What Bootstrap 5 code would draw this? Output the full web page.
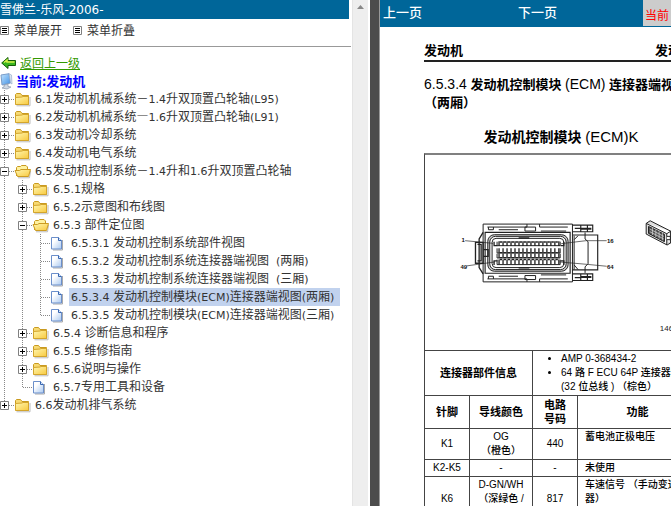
<!DOCTYPE html>
<html lang="zh-CN">
<head>
<meta charset="utf-8">
<meta name="viewport" content="width=device-width, initial-scale=1">
<title>雪佛兰-乐风-2006-</title>
<link href="https://cdn.jsdelivr.net/npm/bootstrap@5.3.0/dist/css/bootstrap.min.css" rel="stylesheet">
<style>
body{font-family:"Noto Sans CJK SC","Liberation Sans",sans-serif;font-size:12px;line-height:18px;color:#333;background:#fff}
svg{flex:none;display:block}
.latin{font-family:"DejaVu Sans",sans-serif;font-size:11px}
.side-title .latin{font-size:12px}
.bar-blue{background:#069;color:#fff}
.side-pane{flex:370 1 0;min-width:0}
.doc-pane{flex:291 1 0;min-width:0;background:#fff}
.splitter{width:10px;background:#4c4c4c;border-right:1px solid #999}
.side-title{height:19px;margin-right:3px}
.side-tools{height:28px;padding-bottom:7px;padding-top:2px;border-bottom:1px solid #999;margin-right:1px;gap:6px}
.side-tools button{color:#333;gap:5px}
.side-tools button + button{margin-left:5px}
.back-link{color:#390;gap:3px;padding-left:1px}
.back-row{padding-top:7px}
.here{font-size:13px;color:#00f;gap:3px}
.scroll-track{width:16px;background:#eee;border-left:1px solid #e4e4e4;margin-right:2px;padding-top:5px}
.tree-row{height:18px}
.tree-row a{color:#333;line-height:16px;padding:0 6px 0 2px;text-decoration:none}
.tree-row a.current{background:#c1d2ee}
.top-nav{height:27px;font-size:13px;line-height:24px}
.top-nav a{color:#fff;text-decoration:none;padding-left:3px}
.nav-prev{flex:0 0 135px}
.nav-next{flex:0 0 128px}
.now-at{background:#ccc;color:red;font-size:12px;line-height:30px;height:26px;padding-left:2px}
.sheet{width:274px;margin:15px 0 0 44px;color:#000;font-family:"Liberation Sans","Noto Sans CJK SC",sans-serif;font-size:13px;line-height:18px}
.run-head{border-bottom:2px solid #222;font-weight:700;padding-right:4px}
.sheet h1{font-size:13px;line-height:18px;margin:13px 0 0;font-weight:700}
.sheet h2{font-size:14px;line-height:20px;margin:15px 0 6px;font-weight:700}
.sheet h1 span,.sheet h2 span{font-weight:500}
.sheet h1 span{font-size:14px}
.sheet h2 span{font-size:15px}
.figure-box{border:1px solid #444;border-top:2px solid #808080;border-bottom:0}
.pins{width:100%;table-layout:fixed;border-collapse:collapse;font-size:11px;line-height:14px;color:#000}
.pins th,.pins td{border:1px solid #444;padding:1px 2px;text-align:center;vertical-align:middle}
.pins td{font-size:10px;font-weight:500}
.pins th{font-weight:700;padding:2px}
.pins .func{text-align:left;padding-left:7px;vertical-align:top;white-space:nowrap}
.pins .info{text-align:left;padding:1px 0 1px 16px;white-space:nowrap}
.info ul{padding-left:12px}
</style>
<script src="https://cdn.jsdelivr.net/npm/bootstrap@5.3.0/dist/js/bootstrap.bundle.min.js"></script>
</head>
<body class="overflow-hidden">
<svg width="0" height="0" class="position-absolute" aria-hidden="true">
<defs>
<linearGradient id="gold" x1="0" y1="0" x2="1" y2="1"><stop offset="0" stop-color="#fff7b0"/><stop offset="1" stop-color="#f8c93e"/></linearGradient>
<linearGradient id="paper" x1="0" y1="0" x2="1" y2="1"><stop offset=".3" stop-color="#fff"/><stop offset="1" stop-color="#a9c8f0"/></linearGradient>
<linearGradient id="screen" x1="0" y1="0" x2="1" y2="1"><stop offset="0" stop-color="#c4e6ff"/><stop offset="1" stop-color="#3f8fe4"/></linearGradient>
<symbol id="vline" viewBox="0 0 18 18"><path d="M4.5 0V18" stroke="#888" stroke-dasharray="1 1"/></symbol>
<symbol id="plus" viewBox="0 0 14 18"><path d="M4.500 0V18M9 9.500H14" stroke="#888" stroke-dasharray="1 1"/><path d="M.5 5.500h8v8h-8z" fill="#fff" stroke="#808080"/><path d="M2 9.500h5M4.500 7v5" stroke="#000"/></symbol>
<symbol id="plusend" viewBox="0 0 14 18"><path d="M4.500 0V9M9 9.500H14" stroke="#888" stroke-dasharray="1 1"/><path d="M.5 5.500h8v8h-8z" fill="#fff" stroke="#808080"/><path d="M2 9.500h5M4.500 7v5" stroke="#000"/></symbol>
<symbol id="minus" viewBox="0 0 14 18"><path d="M4.500 0V18M9 9.500H14" stroke="#888" stroke-dasharray="1 1"/><path d="M.5 5.500h8v8h-8z" fill="#fff" stroke="#808080"/><path d="M2 9.500h5" stroke="#000"/></symbol>
<symbol id="join" viewBox="0 0 14 18"><path d="M4.500 0V18M5 9.500H14" stroke="#888" stroke-dasharray="1 1"/></symbol>
<symbol id="joinend" viewBox="0 0 14 18"><path d="M4.500 0V10M5 9.500H14" stroke="#888" stroke-dasharray="1 1"/></symbol>
<symbol id="folder" viewBox="0 0 19 18"><path d="M2.500 15.800H16V7" fill="none" stroke="#bbb"/><path d="M1.500 14V4.500L2.500 3.500H6.500L8 5.500H14.500V14.500H2z" fill="#f7da73" stroke="#c99a20"/><path d="M1.500 7.500L8 7L9 6.500H14.500V14.500H1.500z" fill="url(#gold)" stroke="#d3a52c"/></symbol>
<symbol id="open" viewBox="0 0 19 18"><path d="M4 15.800H15.500L16.500 9" fill="none" stroke="#bbb"/><path d="M2.500 14V5.500L3.500 4.500H6.500L7.500 3.500H12L13.500 5V9" fill="#fff2a0" stroke="#c99a20"/><path d="M1 8.500H5.500L7 7.500H16.500L14.500 14.500H3.500z" fill="url(#gold)" stroke="#cc9c22"/></symbol>
<symbol id="page" viewBox="0 0 19 18"><path d="M3 16H12.500V6" fill="none" stroke="#aaa"/><path d="M1.500 3.500H8.500L11.500 6.500V15H1.500z" fill="url(#paper)" stroke="#6b8fcb"/><path d="M8.500 3.500V6.500H11.500" fill="#dbe9fb" stroke="#3866b0"/></symbol>
<symbol id="lines" viewBox="0 0 9 9"><path d="M.5.5h8v8h-8z" fill="#fff" stroke="#808080"/><path d="M2 2.500h5M2 4.500h5M2 6.500h5" stroke="#000"/></symbol>
</defs>
</svg>

<div class="d-flex vh-100">
<aside class="side-pane d-flex overflow-hidden">
<div class="flex-grow-1 overflow-hidden text-nowrap">
<header class="side-title bar-blue">雪佛兰<span class="latin">-</span>乐风<span class="latin">-2006-</span></header>
<div class="side-tools d-flex align-items-center">
<button type="button" class="border-0 bg-transparent p-0 d-flex align-items-center"><svg width="9" height="9"><use href="#lines"/></svg>菜单展开</button>
<button type="button" class="border-0 bg-transparent p-0 d-flex align-items-center"><svg width="9" height="9"><use href="#lines"/></svg>菜单折叠</button>
</div>
<div class="back-row"><a href="#" class="back-link d-flex align-items-center"><svg width="16" height="14" viewBox="0 0 16 14"><path d="M.7 7L7 1.500V4.500H14.500V9.500H7V12.500z" fill="#39b520" stroke="#145c0a"/><path d="M3 6.500L6 4V6H13.500" fill="none" stroke="#d3ef48" stroke-width="1.500"/></svg>返回上一级</a></div>
<div class="here d-flex align-items-center fw-bold"><svg width="13" height="17" viewBox="0 0 13 17"><path d="M1 2L9 .7L10.500 10L2 12z" fill="url(#screen)" stroke="#7a9cc8"/><path d="M9 .7L11.500 2L12 11L10.500 10z" fill="#dbe6f2" stroke="#8ea6c4" stroke-width=".6"/><path d="M4 12L8 11V13.500L11 14L7 16L2 15L4 14z" fill="#cfd8e4" stroke="#8896aa" stroke-width=".7"/></svg><span>当前:发动机</span></div>
<nav aria-label="目录">
<ul class="list-unstyled m-0">
<li><div class="tree-row d-flex align-items-center"><svg width="14" height="18"><use href="#plus"/></svg><svg width="19" height="18"><use href="#folder"/></svg><a href="#"><span class="latin">6.1</span>发动机机械系统－<span class="latin">1.4</span>升双顶置凸轮轴<span class="latin">(L95)</span></a></div></li>
<li><div class="tree-row d-flex align-items-center"><svg width="14" height="18"><use href="#plus"/></svg><svg width="19" height="18"><use href="#folder"/></svg><a href="#"><span class="latin">6.2</span>发动机机械系统—<span class="latin">1.6</span>升双顶置凸轮轴<span class="latin">(L91)</span></a></div></li>
<li><div class="tree-row d-flex align-items-center"><svg width="14" height="18"><use href="#plus"/></svg><svg width="19" height="18"><use href="#folder"/></svg><a href="#"><span class="latin">6.3</span>发动机冷却系统</a></div></li>
<li><div class="tree-row d-flex align-items-center"><svg width="14" height="18"><use href="#plus"/></svg><svg width="19" height="18"><use href="#folder"/></svg><a href="#"><span class="latin">6.4</span>发动机电气系统</a></div></li>
<li><div class="tree-row d-flex align-items-center"><svg width="14" height="18"><use href="#minus"/></svg><svg width="19" height="18"><use href="#open"/></svg><a href="#"><span class="latin">6.5</span>发动机控制系统－<span class="latin">1.4</span>升和<span class="latin">1.6</span>升双顶置凸轮轴</a></div>
<ul class="list-unstyled m-0">
<li><div class="tree-row d-flex align-items-center"><svg width="18" height="18"><use href="#vline"/></svg><svg width="14" height="18"><use href="#plus"/></svg><svg width="19" height="18"><use href="#folder"/></svg><a href="#"><span class="latin">6.5.1</span>规格</a></div></li>
<li><div class="tree-row d-flex align-items-center"><svg width="18" height="18"><use href="#vline"/></svg><svg width="14" height="18"><use href="#plus"/></svg><svg width="19" height="18"><use href="#folder"/></svg><a href="#"><span class="latin">6.5.2</span>示意图和布线图</a></div></li>
<li><div class="tree-row d-flex align-items-center"><svg width="18" height="18"><use href="#vline"/></svg><svg width="14" height="18"><use href="#minus"/></svg><svg width="19" height="18"><use href="#open"/></svg><a href="#"><span class="latin">6.5.3 </span>部件定位图</a></div>
<ul class="list-unstyled m-0">
<li><div class="tree-row d-flex align-items-center"><svg width="18" height="18"><use href="#vline"/></svg><svg width="18" height="18"><use href="#vline"/></svg><svg width="14" height="18"><use href="#join"/></svg><svg width="19" height="18"><use href="#page"/></svg><a href="#"><span class="latin">6.5.3.1 </span>发动机控制系统部件视图</a></div></li>
<li><div class="tree-row d-flex align-items-center"><svg width="18" height="18"><use href="#vline"/></svg><svg width="18" height="18"><use href="#vline"/></svg><svg width="14" height="18"><use href="#join"/></svg><svg width="19" height="18"><use href="#page"/></svg><a href="#"><span class="latin">6.5.3.2 </span>发动机控制系统连接器端视图<span class="latin">&nbsp; (</span>两厢<span class="latin">)</span></a></div></li>
<li><div class="tree-row d-flex align-items-center"><svg width="18" height="18"><use href="#vline"/></svg><svg width="18" height="18"><use href="#vline"/></svg><svg width="14" height="18"><use href="#join"/></svg><svg width="19" height="18"><use href="#page"/></svg><a href="#"><span class="latin">6.5.3.3 </span>发动机控制系统连接器端视图<span class="latin">&nbsp; (</span>三厢<span class="latin">)</span></a></div></li>
<li><div class="tree-row d-flex align-items-center"><svg width="18" height="18"><use href="#vline"/></svg><svg width="18" height="18"><use href="#vline"/></svg><svg width="14" height="18"><use href="#join"/></svg><svg width="19" height="18"><use href="#page"/></svg><a href="#" class="current" aria-current="page"><span class="latin">6.5.3.4 </span>发动机控制模块<span class="latin">(ECM)</span>连接器端视图<span class="latin">(</span>两厢<span class="latin">)</span></a></div></li>
<li><div class="tree-row d-flex align-items-center"><svg width="18" height="18"><use href="#vline"/></svg><svg width="18" height="18"><use href="#vline"/></svg><svg width="14" height="18"><use href="#joinend"/></svg><svg width="19" height="18"><use href="#page"/></svg><a href="#"><span class="latin">6.5.3.5 </span>发动机控制模块<span class="latin">(ECM)</span>连接器端视图<span class="latin">(</span>三厢<span class="latin">)</span></a></div></li>
</ul></li>
<li><div class="tree-row d-flex align-items-center"><svg width="18" height="18"><use href="#vline"/></svg><svg width="14" height="18"><use href="#plus"/></svg><svg width="19" height="18"><use href="#folder"/></svg><a href="#"><span class="latin">6.5.4 </span>诊断信息和程序</a></div></li>
<li><div class="tree-row d-flex align-items-center"><svg width="18" height="18"><use href="#vline"/></svg><svg width="14" height="18"><use href="#plus"/></svg><svg width="19" height="18"><use href="#folder"/></svg><a href="#"><span class="latin">6.5.5 </span>维修指南</a></div></li>
<li><div class="tree-row d-flex align-items-center"><svg width="18" height="18"><use href="#vline"/></svg><svg width="14" height="18"><use href="#plus"/></svg><svg width="19" height="18"><use href="#folder"/></svg><a href="#"><span class="latin">6.5.6</span>说明与操作</a></div></li>
<li><div class="tree-row d-flex align-items-center"><svg width="18" height="18"><use href="#vline"/></svg><svg width="14" height="18"><use href="#joinend"/></svg><svg width="19" height="18"><use href="#page"/></svg><a href="#"><span class="latin">6.5.7</span>专用工具和设备</a></div></li>
</ul></li>
<li><div class="tree-row d-flex align-items-center"><svg width="14" height="18"><use href="#plusend"/></svg><svg width="19" height="18"><use href="#folder"/></svg><a href="#"><span class="latin">6.6</span>发动机排气系统</a></div></li>
</ul>
</nav>
</div>
<div class="scroll-track d-flex flex-column align-items-center flex-shrink-0"><svg width="7" height="4" viewBox="0 0 7 4"><path d="M0 4L3.500 0L7 4z" fill="#888"/></svg></div>
</aside>
<div class="splitter flex-shrink-0"></div>

<main class="doc-pane overflow-hidden">
<nav class="top-nav bar-blue d-flex text-nowrap overflow-hidden" aria-label="翻页">
<a href="#" class="nav-prev fw-medium">上一页</a><a href="#" class="nav-next fw-medium">下一页</a><span class="now-at flex-grow-1">当前</span>
</nav>
<article class="sheet">
<div class="run-head d-flex justify-content-between"><span>发动机</span><span>发动机</span></div>
<h1><span>6.5.3.4</span> 发动机控制模块 <span>(ECM)</span> 连接器端视图<br>（两厢）</h1>
<h2 class="text-center">发动机控制模块 <span>(ECM)K</span></h2>
<div class="figure-box">
<svg class="w-100 h-auto" viewBox="-45 -171 819 588" fill="none" stroke="#222" stroke-width="3" role="img" aria-label="ECM 连接器端视图">
<path d="M130 37H399V211H130zM143 46H262V37M300 37V46H385M143 202H262V211M300 211V202H385M146 46v8h15v-8M177 54h58M304 58h76M146 202v-8h15v8M177 194h58M304 190h76M256 46h32v12h-32zM256 192h32v12h-32z"/>
<path d="M130 62L118 82V168L130 187M107 92H130V155H107zM113 98H124V148H113" stroke-width="4"/>
<path d="M136 62H392V185H136zM399 70H475V175H399" stroke-width="3.500"/>
<rect x="144" y="69" width="242" height="110" rx="20" fill="#ccc"/>
<rect x="150" y="74" width="230" height="100" rx="17" fill="#fff"/>
<rect x="157" y="80" width="216" height="88" rx="12"/>
<path d="M131 114H145V134H131M237 79h32M237 169h32" stroke-width="4"/>
<path d="M172 90V102H362V90M172 110V124H362V110M172 126V139H362V126M172 144V159H362V144"/>
<path d="M176 96H360M176 117H360M176 132H360M176 151H360" stroke-width="14" stroke-dasharray="4 8"/>
<path d="M180 91H358M180 123H358M180 138H358M180 144H358" stroke-width="4" stroke-dasharray="7 5"/>
<path d="M163 90v12h10M163 160v-12h10M373 90v12h-10M373 160v-12h-10" stroke-width="4"/>
<path d="M399 40H460V60H399M399 187H460V207H399M424 42V59M444 42V59M424 188V206M444 188V206M406 50H424M406 198H424" stroke-width="3.500"/>
<path d="M424 51H456M424 196H456" stroke-width="6"/>
<path d="M404 72V174M416 72L404 84M416 174L404 160M437 62V82L446 90V156L437 166V184"/>
<path d="M76 87L160 95M365 96L440 87H502M80 163L165 151M360 151L440 158L502 164" stroke-width="2"/>
<path d="M621 35L633 27L694 58M621 35V67L684 100L694 94M621 35L683 66V100M683 66L694 59" fill="#ddd"/><path d="M628 44L676 68V90L628 65z" fill="#555"/><path d="M632 52L674 74M632 60L674 82M640 48V70M650 53V76M660 58V81M670 63V86" stroke="#ddd" stroke-width="2"/><path d="M683 74H694V84H683" fill="#fff"/><path d="M694 58L735 80V112L694 94z" fill="#eee"/>
<g fill="#111" stroke="none" font-family="Liberation Sans, sans-serif" font-size="18" font-weight="700"><text x="65" y="92">1</text><text x="503" y="93">16</text><text x="62" y="173">49</text><text x="503" y="173">64</text></g>
<text x="662" y="360" fill="#222" stroke="none" font-family="Liberation Sans, sans-serif" font-size="24">146</text>
</svg>
</div>
<table class="pins">
<colgroup><col style="width:45px"><col style="width:63px"><col style="width:45px"><col></colgroup>
<tbody>
<tr><th colspan="2" scope="row">连接器部件信息</th><td colspan="2" class="info"><ul class="mb-0"><li>AMP 0-368434-2</li><li>64 路 F ECU 64P 连接器线束<br>(32 位总线 ) （棕色）</li></ul></td></tr>
<tr><th scope="col">针脚</th><th scope="col">导线颜色</th><th scope="col">电路<br>号码</th><th scope="col">功能</th></tr>
<tr><td>K1</td><td>OG<br>（橙色）</td><td>440</td><td class="func">蓄电池正极电压</td></tr>
<tr><td>K2-K5</td><td>-</td><td>-</td><td class="func">未使用</td></tr>
<tr><td>K6</td><td>D-GN/WH<br>（深绿色 /<br>白色）</td><td>817</td><td class="func">车速信号 （手动变速<br>器）</td></tr>
</tbody>
</table>
</article>
</main>
</div>
</body>
</html>
